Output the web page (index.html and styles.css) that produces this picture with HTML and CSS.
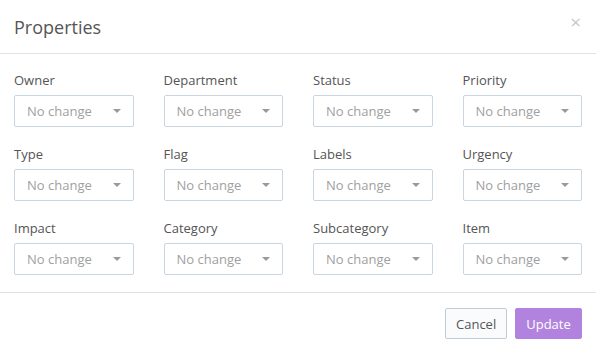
FILE: index.html
```html
<!DOCTYPE html>
<html>
<head>
<meta charset="utf-8">
<link rel="stylesheet" href="styles.css">
</head>
<body>
<div class="modal">
  <div class="modal-header">
    <h2 class="title">Properties</h2>
    <span class="close">&times;</span>
  </div>
  <div class="modal-body">
    <div class="field"><label>Owner</label><div class="select"><span>No change</span><i class="caret"></i></div></div>
    <div class="field"><label>Department</label><div class="select"><span>No change</span><i class="caret"></i></div></div>
    <div class="field"><label>Status</label><div class="select"><span>No change</span><i class="caret"></i></div></div>
    <div class="field"><label>Priority</label><div class="select"><span>No change</span><i class="caret"></i></div></div>
    <div class="field"><label>Type</label><div class="select"><span>No change</span><i class="caret"></i></div></div>
    <div class="field"><label>Flag</label><div class="select"><span>No change</span><i class="caret"></i></div></div>
    <div class="field"><label>Labels</label><div class="select"><span>No change</span><i class="caret"></i></div></div>
    <div class="field"><label>Urgency</label><div class="select"><span>No change</span><i class="caret"></i></div></div>
    <div class="field"><label>Impact</label><div class="select"><span>No change</span><i class="caret"></i></div></div>
    <div class="field"><label>Category</label><div class="select"><span>No change</span><i class="caret"></i></div></div>
    <div class="field"><label>Subcategory</label><div class="select"><span>No change</span><i class="caret"></i></div></div>
    <div class="field"><label>Item</label><div class="select"><span>No change</span><i class="caret"></i></div></div>
  </div>
  <div class="modal-footer">
    <button class="btn btn-default">Cancel</button>
    <button class="btn btn-primary">Update</button>
  </div>
</div>
</body>
</html>
```
FILE: styles.css
```css
html, body {
  margin: 0;
  padding: 0;
  background: #fff;
}
body {
  font-family: "Open Sans", "Liberation Sans", sans-serif;
  color: #555;
}
.modal {
  width: 596px;
  height: 353px;
  box-sizing: border-box;
}
.modal-header {
  height: 54px;
  box-sizing: border-box;
  border-bottom: 1px solid #e2e2e2;
  display: flex;
  align-items: center;
  justify-content: space-between;
  padding: 0 14px;
}
.title {
  margin: 0;
  font-size: 18px;
  font-weight: 400;
  color: #555;
  line-height: 26px;
  position: relative;
  top: 0;
}
.close {
  font-size: 19px;
  color: #c8c8c8;
  line-height: 1;
  position: relative;
  top: -4px;
  right: 1px;
}
.modal-body {
  padding: 16px 14px 17px;
  display: grid;
  grid-template-columns: repeat(4, 1fr);
  column-gap: 30px;
  row-gap: 17px;
}
.field label {
  display: block;
  font-size: 13px;
  line-height: 20px;
  color: #555;
  margin-bottom: 5px;
}
.select {
  height: 32px;
  box-sizing: border-box;
  border: 1px solid #c9d5e1;
  border-radius: 2px;
  background: #fff;
  display: flex;
  align-items: center;
  justify-content: space-between;
  padding: 0 12px 0 12px;
}
.select span {
  font-size: 13px;
  color: #a0a0a0;
}
.caret {
  width: 0;
  height: 0;
  border-left: 4px solid transparent;
  border-right: 4px solid transparent;
  border-top: 4px solid #9a9a9a;
}
.modal-footer {
  border-top: 1px solid #e2e2e2;
  padding: 15px 14px;
  display: flex;
  justify-content: flex-end;
  gap: 8px;
}
.btn {
  font-family: "Open Sans", "Liberation Sans", sans-serif;
  font-size: 13px;
  height: 31px;
  border-radius: 2px;
  padding: 0 10px;
  cursor: pointer;
}
.btn-default {
  background: #fafbfc;
  border: 1px solid #c3ccd5;
  color: #555;
  width: 62px;
}
.btn-primary {
  background: #b283de;
  border: 1px solid #b283de;
  color: #fff;
  width: 67px;
}
```
